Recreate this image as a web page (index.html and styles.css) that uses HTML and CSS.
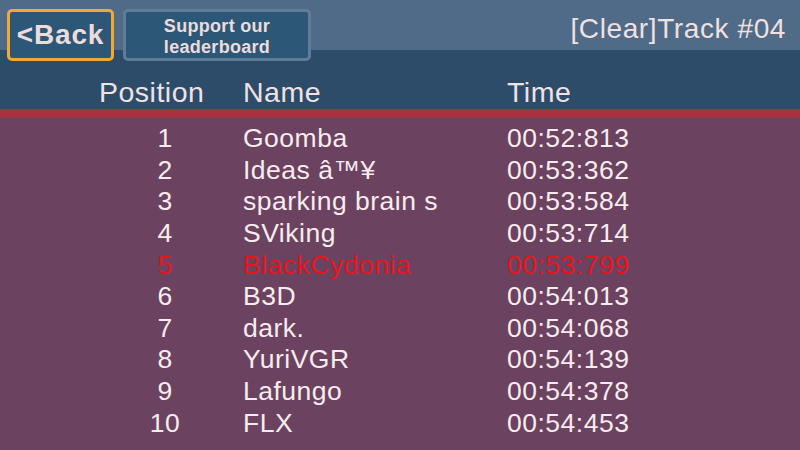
FILE: index.html
```html
<!DOCTYPE html>
<html>
<head>
<meta charset="utf-8">
<link rel="stylesheet" href="styles.css">
</head>
<body>
<div class="screen">
  <div class="topbar">
    <div class="btn back">&lt;Back</div>
    <div class="btn support">Support our<br>leaderboard</div>
    <div class="title">[Clear]Track #04</div>
  </div>
  <div class="header">
    <div class="c-pos">Position</div>
    <div class="c-name">Name</div>
    <div class="c-time">Time</div>
  </div>
  <div class="redline"></div>
  <div class="rows">
    <div class="row"><div class="c-pos">1</div><div class="c-name">Goomba</div><div class="c-time">00:52:813</div></div>
    <div class="row"><div class="c-pos">2</div><div class="c-name">Ideas â™¥</div><div class="c-time">00:53:362</div></div>
    <div class="row"><div class="c-pos">3</div><div class="c-name">sparking brain s</div><div class="c-time">00:53:584</div></div>
    <div class="row"><div class="c-pos">4</div><div class="c-name">SViking</div><div class="c-time">00:53:714</div></div>
    <div class="row me"><div class="c-pos">5</div><div class="c-name">BlackCydonia</div><div class="c-time">00:53:799</div></div>
    <div class="row"><div class="c-pos">6</div><div class="c-name">B3D</div><div class="c-time">00:54:013</div></div>
    <div class="row"><div class="c-pos">7</div><div class="c-name">dark.</div><div class="c-time">00:54:068</div></div>
    <div class="row"><div class="c-pos">8</div><div class="c-name">YuriVGR</div><div class="c-time">00:54:139</div></div>
    <div class="row"><div class="c-pos">9</div><div class="c-name">Lafungo</div><div class="c-time">00:54:378</div></div>
    <div class="row"><div class="c-pos">10</div><div class="c-name">FLX</div><div class="c-time">00:54:453</div></div>
  </div>
</div>
</body>
</html>
```
FILE: styles.css
```css
html, body {
  margin: 0;
  padding: 0;
}
body {
  width: 800px;
  height: 450px;
  overflow: hidden;
  font-family: "Liberation Sans", Arial, sans-serif;
  color: #f4e6e6;
}
.screen {
  width: 800px;
  height: 450px;
  background: #6b4260;
  display: flex;
  flex-direction: column;
}
.topbar {
  height: 50px;
  background: #4f6b87;
  display: flex;
  align-items: flex-start;
  padding: 9px 0 0 7px;
  box-sizing: border-box;
  position: relative;
}
.btn {
  box-sizing: border-box;
  height: 52px;
  border-radius: 5px;
  background: #2d5777;
  display: flex;
  align-items: center;
  justify-content: center;
  text-align: center;
  font-weight: bold;
  color: #ecdcdc;
  position: relative;
  z-index: 2;
}
.back {
  width: 107px;
  border: 3px solid #f2a831;
  font-size: 28px;
  letter-spacing: 0.8px;
  padding-bottom: 1px;
}
.support {
  width: 188px;
  margin-left: 9px;
  border: 3px solid #5d7d98;
  font-size: 18px;
  letter-spacing: 0.3px;
  line-height: 21px;
  padding-top: 3px;
}
.title {
  margin-left: auto;
  margin-right: 14px;
  font-size: 28px;
  letter-spacing: 0.6px;
  line-height: 28px;
  margin-top: 6px;
  color: #f0e0e0;
}
.header {
  height: 59px;
  background: #2c4c6a;
  display: flex;
  align-items: flex-end;
  font-size: 28.5px;
  letter-spacing: 0.5px;
  padding-bottom: 0;
  box-sizing: border-box;
  color: #f0e2e2;
}
.redline {
  height: 9px;
  background: #a33341;
}
.rows {
  padding-top: 5px;
  display: flex;
  flex-direction: column;
}
.row {
  height: 31.6px;
  display: flex;
  align-items: center;
  font-size: 26.5px;
  letter-spacing: 0.5px;
  color: #f8ecec;
}
.row.me {
  color: #e8141c;
}
.c-pos {
  width: 243px;
  box-sizing: border-box;
  text-align: center;
  padding-left: 87px;
  padding-right: 0;
}
.header .c-pos {
  padding-left: 99px;
  padding-right: 0;
  text-align: left;
}
.c-name {
  width: 264px;
  white-space: nowrap;
}
.c-time {
  flex: 1;
}
```
